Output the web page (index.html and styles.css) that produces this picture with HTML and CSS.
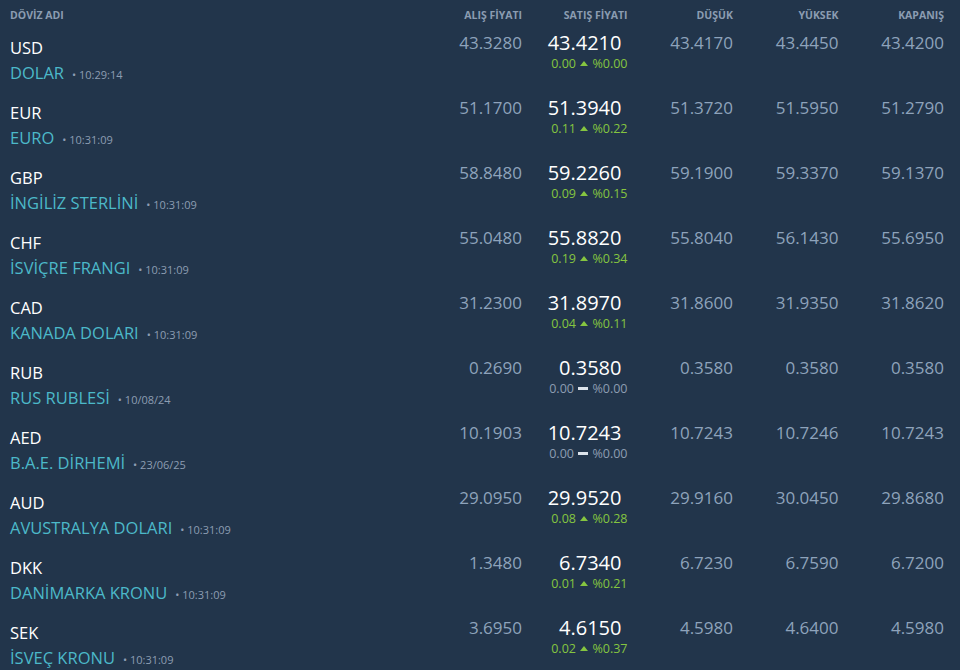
FILE: index.html
```html
<!DOCTYPE html>
<html lang="tr">
<head>
<meta charset="utf-8">
<title>Döviz</title>
<link rel="stylesheet" href="styles.css">
</head>
<body>
<div class="table">
  <div class="row head">
    <div class="c name">DÖVİZ ADI</div>
    <div class="c num">ALIŞ FİYATI</div>
    <div class="c num">SATIŞ FİYATI</div>
    <div class="c num">DÜŞÜK</div>
    <div class="c num">YÜKSEK</div>
    <div class="c num">KAPANIŞ</div>
  </div>

  <div class="row">
    <div class="c name"><div class="code">USD</div><div class="full"><span class="fn">DOLAR</span><span class="time">• 10:29:14</span></div></div>
    <div class="c num val">43.3280</div>
    <div class="c sell"><div class="sv">43.4210</div><div class="chg up">0.00 <i class="tri"></i> %0.00</div></div>
    <div class="c num val">43.4170</div>
    <div class="c num val">43.4450</div>
    <div class="c num val">43.4200</div>
  </div>

  <div class="row">
    <div class="c name"><div class="code">EUR</div><div class="full"><span class="fn">EURO</span><span class="time">• 10:31:09</span></div></div>
    <div class="c num val">51.1700</div>
    <div class="c sell"><div class="sv">51.3940</div><div class="chg up">0.11 <i class="tri"></i> %0.22</div></div>
    <div class="c num val">51.3720</div>
    <div class="c num val">51.5950</div>
    <div class="c num val">51.2790</div>
  </div>

  <div class="row">
    <div class="c name"><div class="code">GBP</div><div class="full"><span class="fn">İNGİLİZ STERLİNİ</span><span class="time">• 10:31:09</span></div></div>
    <div class="c num val">58.8480</div>
    <div class="c sell"><div class="sv">59.2260</div><div class="chg up">0.09 <i class="tri"></i> %0.15</div></div>
    <div class="c num val">59.1900</div>
    <div class="c num val">59.3370</div>
    <div class="c num val">59.1370</div>
  </div>

  <div class="row">
    <div class="c name"><div class="code">CHF</div><div class="full"><span class="fn">İSVİÇRE FRANGI</span><span class="time">• 10:31:09</span></div></div>
    <div class="c num val">55.0480</div>
    <div class="c sell"><div class="sv">55.8820</div><div class="chg up">0.19 <i class="tri"></i> %0.34</div></div>
    <div class="c num val">55.8040</div>
    <div class="c num val">56.1430</div>
    <div class="c num val">55.6950</div>
  </div>

  <div class="row">
    <div class="c name"><div class="code">CAD</div><div class="full"><span class="fn">KANADA DOLARI</span><span class="time">• 10:31:09</span></div></div>
    <div class="c num val">31.2300</div>
    <div class="c sell"><div class="sv">31.8970</div><div class="chg up">0.04 <i class="tri"></i> %0.11</div></div>
    <div class="c num val">31.8600</div>
    <div class="c num val">31.9350</div>
    <div class="c num val">31.8620</div>
  </div>

  <div class="row">
    <div class="c name"><div class="code">RUB</div><div class="full"><span class="fn">RUS RUBLESİ</span><span class="time">• 10/08/24</span></div></div>
    <div class="c num val">0.2690</div>
    <div class="c sell"><div class="sv">0.3580</div><div class="chg flat">0.00 <i class="dash"></i> %0.00</div></div>
    <div class="c num val">0.3580</div>
    <div class="c num val">0.3580</div>
    <div class="c num val">0.3580</div>
  </div>

  <div class="row">
    <div class="c name"><div class="code">AED</div><div class="full"><span class="fn">B.A.E. DİRHEMİ</span><span class="time">• 23/06/25</span></div></div>
    <div class="c num val">10.1903</div>
    <div class="c sell"><div class="sv">10.7243</div><div class="chg flat">0.00 <i class="dash"></i> %0.00</div></div>
    <div class="c num val">10.7243</div>
    <div class="c num val">10.7246</div>
    <div class="c num val">10.7243</div>
  </div>

  <div class="row">
    <div class="c name"><div class="code">AUD</div><div class="full"><span class="fn">AVUSTRALYA DOLARI</span><span class="time">• 10:31:09</span></div></div>
    <div class="c num val">29.0950</div>
    <div class="c sell"><div class="sv">29.9520</div><div class="chg up">0.08 <i class="tri"></i> %0.28</div></div>
    <div class="c num val">29.9160</div>
    <div class="c num val">30.0450</div>
    <div class="c num val">29.8680</div>
  </div>

  <div class="row">
    <div class="c name"><div class="code">DKK</div><div class="full"><span class="fn">DANİMARKA KRONU</span><span class="time">• 10:31:09</span></div></div>
    <div class="c num val">1.3480</div>
    <div class="c sell"><div class="sv">6.7340</div><div class="chg up">0.01 <i class="tri"></i> %0.21</div></div>
    <div class="c num val">6.7230</div>
    <div class="c num val">6.7590</div>
    <div class="c num val">6.7200</div>
  </div>

  <div class="row">
    <div class="c name"><div class="code">SEK</div><div class="full"><span class="fn">İSVEÇ KRONU</span><span class="time">• 10:31:09</span></div></div>
    <div class="c num val">3.6950</div>
    <div class="c sell"><div class="sv">4.6150</div><div class="chg up">0.02 <i class="tri"></i> %0.37</div></div>
    <div class="c num val">4.5980</div>
    <div class="c num val">4.6400</div>
    <div class="c num val">4.5980</div>
  </div>
</div>
</body>
</html>
```

FILE: styles.css
```css
html, body {
  margin: 0;
  padding: 0;
  background: #22354b;
  height: 100%;
  overflow: hidden;
}

body {
  font-family: "Open Sans", "Noto Sans", sans-serif;
  color: #ffffff;
}

.table {
  width: 960px;
}

.row {
  display: grid;
  grid-template-columns: 416.5px repeat(5, 105.5px);
  padding-right: 16px;
  height: 65px;
  box-sizing: border-box;
}

.row.head {
  height: 30px;
  align-items: center;
  font-size: 10.5px;
  font-weight: 700;
  color: #8b9cb1;
}

.c {
  min-width: 0;
}

.name {
  padding-left: 10px;
}

.num {
  text-align: right;
}

.row:not(.head) .name {
  padding-top: 7px;
}

.code {
  font-size: 16.5px;
  line-height: 22px;
  color: #ffffff;
}

.full {
  margin-top: 3px;
  line-height: 22px;
  white-space: nowrap;
}

.fn {
  font-size: 16.5px;
  color: #4cb9c9;
}

.time {
  font-size: 11px;
  color: #8d9db2;
  margin-left: 8px;
}

.val {
  padding-top: 2px;
  font-size: 17px;
  line-height: 22px;
  color: #8ea3bb;
}

.sell {
  padding-top: 1px;
  text-align: right;
}

.sv {
  font-size: 20px;
  line-height: 24px;
  color: #ffffff;
  padding-right: 6px;
}

.chg {
  font-size: 12.5px;
  line-height: 18px;
  white-space: nowrap;
}

.chg.up {
  color: #85c540;
}

.chg.flat {
  color: #8d9db2;
}

.tri {
  display: inline-block;
  width: 0;
  height: 0;
  border-left: 4px solid transparent;
  border-right: 4px solid transparent;
  border-bottom: 5px solid #85c540;
  vertical-align: 2px;
  margin: 0 1px;
}

.dash {
  display: inline-block;
  width: 10px;
  height: 3px;
  background: #dbe2ea;
  vertical-align: 3px;
  margin: 0 1px;
}
```
